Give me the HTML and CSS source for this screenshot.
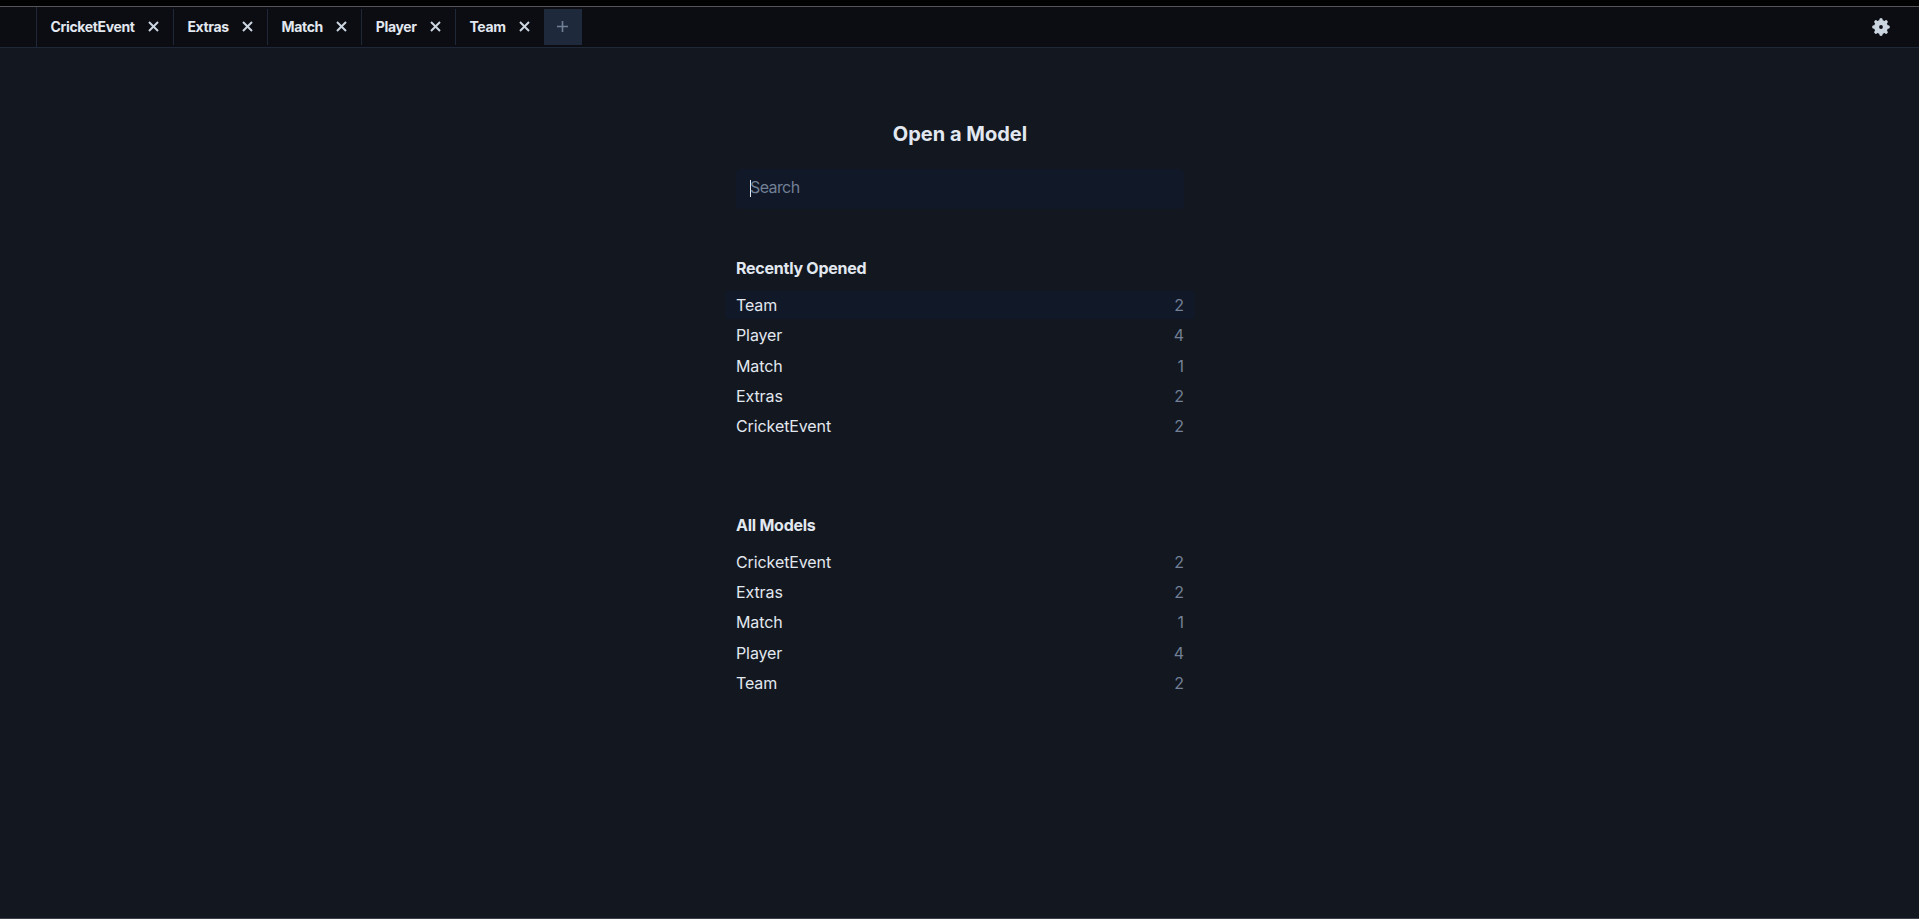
FILE: index.html
```
<!DOCTYPE html>
<html lang="en">
<head>
<meta charset="utf-8">
<title>Open a Model</title>
<link rel="stylesheet" href="styles.css">
</head>
<body>
<header class="topbar">
  <nav class="tabs">
    <div class="tab"><span>CricketEvent</span><svg class="close" viewBox="0 0 10 10"><path d="M.9.9l8.2 8.2M9.1.9L.9 9.1"/></svg></div>
    <div class="tab"><span>Extras</span><svg class="close" viewBox="0 0 10 10"><path d="M.9.9l8.2 8.2M9.1.9L.9 9.1"/></svg></div>
    <div class="tab"><span>Match</span><svg class="close" viewBox="0 0 10 10"><path d="M.9.9l8.2 8.2M9.1.9L.9 9.1"/></svg></div>
    <div class="tab"><span>Player</span><svg class="close" viewBox="0 0 10 10"><path d="M.9.9l8.2 8.2M9.1.9L.9 9.1"/></svg></div>
    <div class="tab last"><span>Team</span><svg class="close" viewBox="0 0 10 10"><path d="M.9.9l8.2 8.2M9.1.9L.9 9.1"/></svg></div>
    <div class="add"><svg class="plus" viewBox="0 0 11 11"><path d="M5.5 0v11M0 5.5h11"/></svg></div>
  </nav>
  <svg class="gear" viewBox="-9 -9 18 18"><circle r="4.400"/><path d="M0-5v-2.200M0 5v2.200M-5 0h-2.200M5 0h2.200M3.600-3.600l1.500-1.500M3.600 3.600l1.500 1.500M-3.600 3.600l-1.500 1.500M-3.600-3.600l-1.500-1.500"/></svg>
</header>
<main class="panel">
  <h1 class="title">Open a Model</h1>
  <div class="search"><i class="caret"></i><span>Search</span></div>
  <h2 class="heading">Recently Opened</h2>
  <ul class="list">
    <li class="row active"><span>Team</span><span class="count">2</span></li>
    <li class="row"><span>Player</span><span class="count">4</span></li>
    <li class="row"><span>Match</span><span class="count">1</span></li>
    <li class="row"><span>Extras</span><span class="count">2</span></li>
    <li class="row"><span>CricketEvent</span><span class="count">2</span></li>
  </ul>
  <h2 class="heading all">All Models</h2>
  <ul class="list">
    <li class="row"><span>CricketEvent</span><span class="count">2</span></li>
    <li class="row"><span>Extras</span><span class="count">2</span></li>
    <li class="row"><span>Match</span><span class="count">1</span></li>
    <li class="row"><span>Player</span><span class="count">4</span></li>
    <li class="row"><span>Team</span><span class="count">2</span></li>
  </ul>
</main>
</body>
</html>
```
FILE: styles.css
```
* { box-sizing: border-box; }
body {
  margin: 0;
  height: 919px;
  overflow: hidden;
  display: flex;
  flex-direction: column;
  background: #13171f;
  border-top: 6px solid #020202;
  border-bottom: 1px solid #3b3f49;
  color: #e2e8f0;
  font-family: Inter, sans-serif;
  font-size: 16px;
}
.topbar {
  height: 42px;
  flex: none;
  display: flex;
  align-items: center;
  justify-content: space-between;
  background: #0c0d12;
  border-top: 1px solid #55555a;
  border-bottom: 1px solid #1e2838;
  padding: 0 29px 0 36px;
}
.tabs { display: flex; align-items: center; height: 40px; border-left: 1px solid #1e2838; }
.tab {
  height: 36px;
  display: flex;
  align-items: center;
  justify-content: space-between;
  gap: 13.300px;
  padding: 0 14px 1px 13.500px;
  border-right: 1px solid #1e2838;
  font-size: 14px;
  font-weight: 700;
  letter-spacing: -0.35px;
}
.tab.last { border-right: 0; }
.close { width: 11px; height: 11px; fill: none; stroke: #cbd5e0; stroke-width: 1.8; }
.add { width: 38px; height: 36px; background: #1e293b; display: flex; align-items: center; justify-content: center; }
.plus { width: 11px; height: 11px; stroke: #718096; stroke-width: 1.6; margin-bottom: 1px; }
.gear { width: 18px; height: 18px; fill: none; stroke: #cbd5e0; stroke-width: 5; stroke-linecap: round; }
.gear path { stroke-width: 3.4; }
.panel { width: 470px; margin: 0 auto; position: relative; left: .5px; }
.title { margin: 72px 0 0; text-align: center; font-size: 20px; line-height: 28px; font-weight: 700; }
.search {
  height: 40px;
  margin: 21px 11px 0;
  padding: 0 14px 4px;
  display: flex;
  align-items: center;
  background: #111827;
  border-radius: 4px;
  color: #718096;
  letter-spacing: -0.6px;
}
.caret { width: 1px; height: 17px; margin: 3px -1px 0 0; background: #e2e8f0; }
.heading { margin: 47px 11px 0; font-size: 16px; line-height: 24px; font-weight: 700; letter-spacing: -0.25px; }
.heading.all { margin-top: 72.750px; }
.list { list-style: none; margin: 11px 0 0; padding: 0; }
.row {
  height: 28px;
  margin-bottom: 2.250px;
  padding: 0 11px;
  display: flex;
  align-items: center;
  justify-content: space-between;
  border-radius: 3px;
  letter-spacing: -0.1px;
}
.row.active { background: #111827; }
.count { color: #718096; }
```
